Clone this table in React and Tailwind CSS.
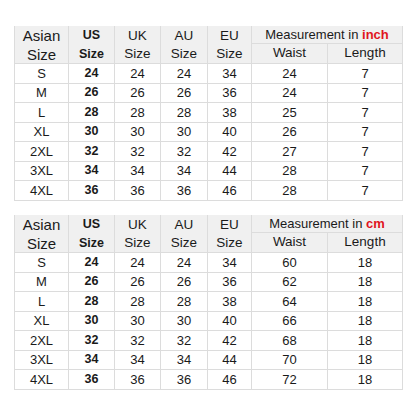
import React from "react";

const rows = [
  ["S", "24", "24", "24", "34"],
  ["M", "26", "26", "26", "36"],
  ["L", "28", "28", "28", "38"],
  ["XL", "30", "30", "30", "40"],
  ["2XL", "32", "32", "32", "42"],
  ["3XL", "34", "34", "34", "44"],
  ["4XL", "36", "36", "36", "46"],
];

const inch = [["24", "7"], ["24", "7"], ["25", "7"], ["26", "7"], ["27", "7"], ["28", "7"], ["28", "7"]];
const cm = [["60", "18"], ["62", "18"], ["64", "18"], ["66", "18"], ["68", "18"], ["70", "18"], ["72", "18"]];

const cell = "flex items-center justify-center border-r border-b border-[#dcdcdc]";

const SizeTable = ({ unit, values }) => (
  <div className="grid grid-cols-[54px_46px_46px_47px_44px_76px_75px] grid-rows-[18px_20px_repeat(7,19.5px)] w-[388px] border-l border-[#dcdcdc] text-[#1a1a1a]">
    <div className={`${cell} row-span-2 bg-[#f0f0f0] flex-col text-[15px] leading-[19px]`}>
      <span>Asian</span>
      <span>Size</span>
    </div>
    <div className={`${cell} row-span-2 bg-[#f0f0f0] flex-col text-[12.5px] leading-[19px] font-bold`}>
      <span>US</span>
      <span>Size</span>
    </div>
    {["UK", "AU", "EU"].map((h) => (
      <div key={h} className={`${cell} row-span-2 bg-[#f0f0f0] flex-col text-[13.5px] leading-[18px]`}>
        <span>{h}</span>
        <span>Size</span>
      </div>
    ))}
    <div className={`${cell} col-span-2 bg-[#f0f0f0] text-[13px]`}>
      Measurement in&nbsp;<b className="text-[#e0141e]">{unit}</b>
    </div>
    <div className={`${cell} bg-[#f0f0f0] text-[13.5px]`}>Waist</div>
    <div className={`${cell} bg-[#f0f0f0] text-[13.5px]`}>Length</div>
    {rows.map((r, i) => (
      <React.Fragment key={r[0]}>
        {r.map((v, j) => (
          <div key={j} className={`${cell} ${j === 1 ? "font-bold text-[12.5px]" : "text-[13px]"}`}>
            {v}
          </div>
        ))}
        <div className={`${cell} text-[13px]`}>{values[i][0]}</div>
        <div className={`${cell} text-[13px]`}>{values[i][1]}</div>
      </React.Fragment>
    ))}
  </div>
);

export default function App() {
  return (
    <div
      className="w-[416px] h-[416px] bg-white pt-[26px] pl-[14px] flex flex-col gap-[14.5px]"
      style={{ fontFamily: '"Liberation Sans", Arial, sans-serif' }}
    >
      <SizeTable unit="inch" values={inch} />
      <SizeTable unit="cm" values={cm} />
    </div>
  );
}
